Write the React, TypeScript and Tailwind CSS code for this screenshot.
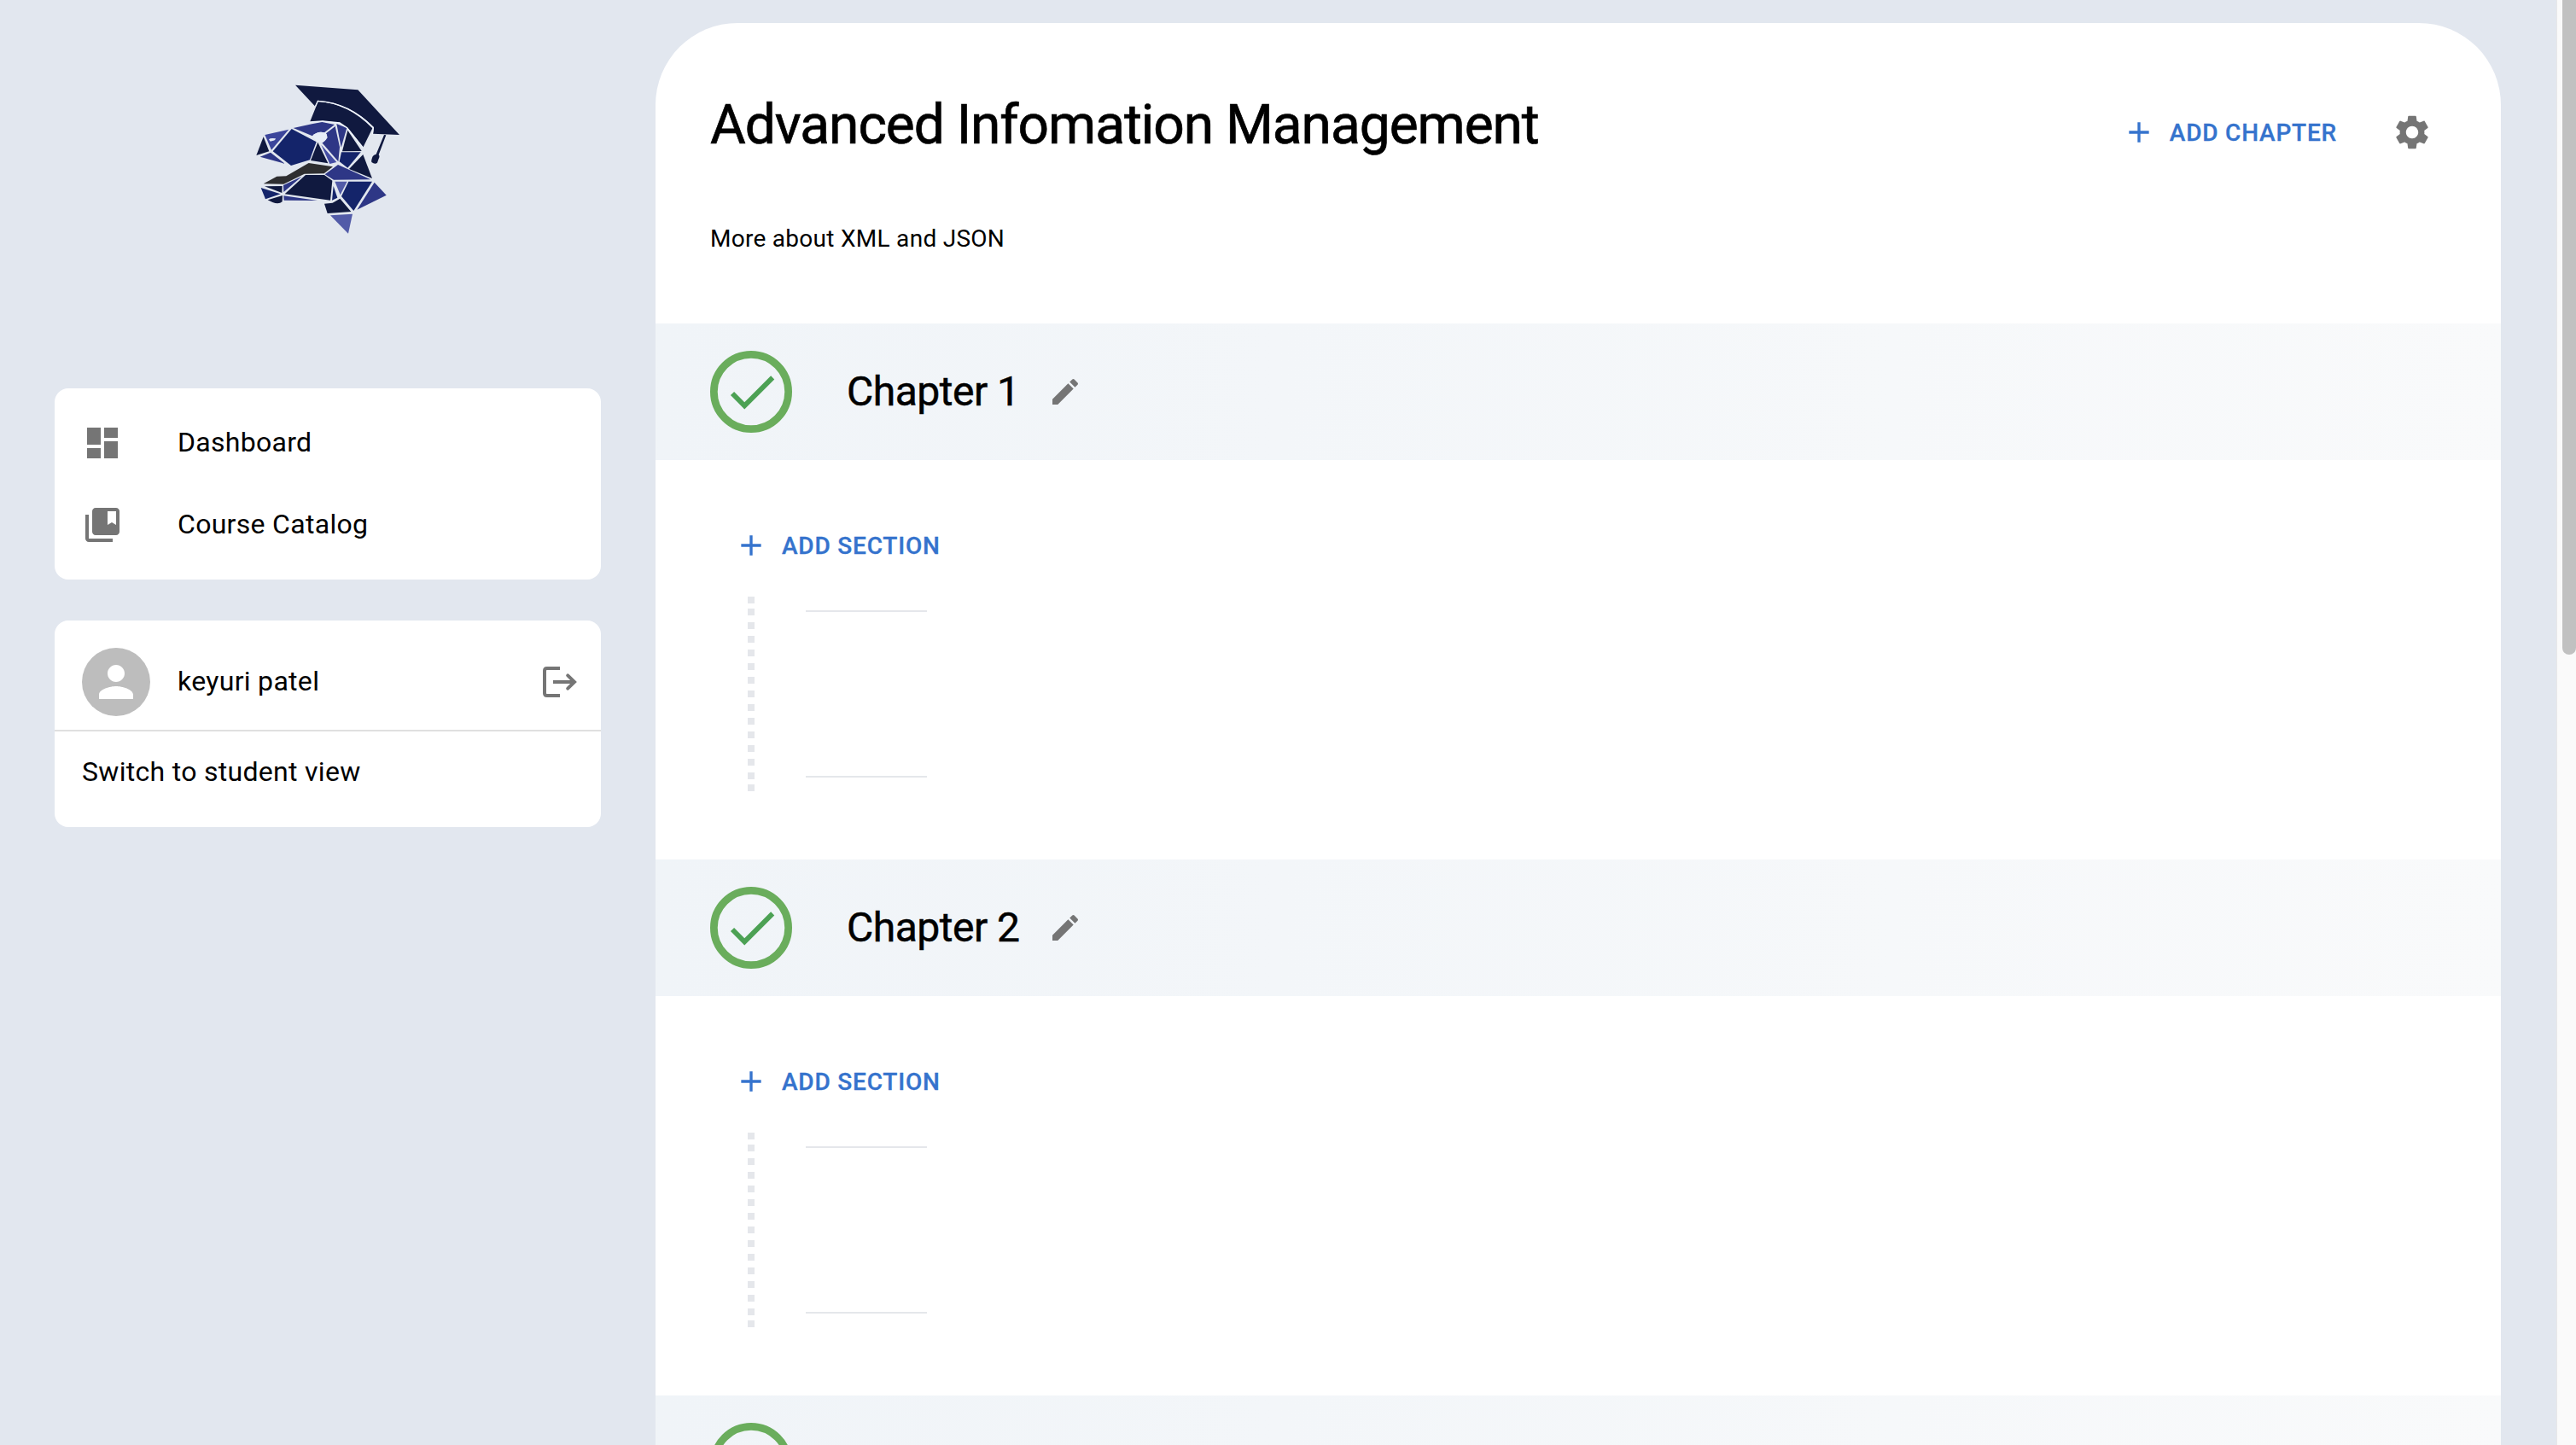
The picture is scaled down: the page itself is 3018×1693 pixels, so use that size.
import React from "react";

type IconProps = { d: string; className: string };

function Icon({ d, className }: IconProps) {
  return (
    <svg viewBox="0 0 24 24" fill="currentColor" className={className} aria-hidden="true">
      <path d={d} />
    </svg>
  );
}

const icons = {
  dashboard: "M3 13h8V3H3v10zm0 8h8v-6H3v6zm10 0h8V11h-8v10zm0-18v6h8V3h-8z",
  collections:
    "M4 6H2v14c0 1.1.9 2 2 2h14v-2H4V6zM20 2H8c-1.1 0-2 .9-2 2v12c0 1.1.9 2 2 2h12c1.1 0 2-.9 2-2V4c0-1.1-.9-2-2-2zm0 10-2.5-1.5L15 12V4h5v8z",
  person:
    "M12 12c2.21 0 4-1.79 4-4s-1.79-4-4-4-4 1.79-4 4 1.79 4 4 4zm0 2c-2.67 0-8 1.34-8 4v2h16v-2c0-2.66-5.33-4-8-4z",
  plus: "M19 13h-6v6h-2v-6H5v-2h6V5h2v6h6v2z",
  check: "M9 16.17 4.83 12l-1.42 1.41L9 19 21 7l-1.41-1.41z",
  edit: "M3 17.25V21h3.75L17.81 9.94l-3.75-3.75L3 17.25zM20.71 7.04c.39-.39.39-1.02 0-1.41l-2.34-2.34a.9959.9959 0 0 0-1.41 0l-1.83 1.83 3.75 3.75 1.83-1.83z",
  settings:
    "M19.14 12.94c.04-.3.06-.61.06-.94 0-.32-.02-.64-.07-.94l2.03-1.58c.18-.14.23-.41.12-.61l-1.92-3.32c-.12-.22-.37-.29-.59-.22l-2.39.96c-.5-.38-1.03-.7-1.62-.94l-.36-2.54c-.04-.24-.24-.41-.48-.41h-3.84c-.24 0-.43.17-.47.41l-.36 2.54c-.59.24-1.13.57-1.62.94l-2.39-.96c-.22-.08-.47 0-.59.22L2.74 8.87c-.12.21-.08.47.12.61l2.03 1.58c-.05.3-.09.63-.09.94s.02.64.07.94l-2.03 1.58c-.18.14-.23.41-.12.61l1.92 3.32c.12.22.37.29.59.22l2.39-.96c.5.38 1.03.7 1.62.94l.36 2.54c.05.24.24.41.48.41h3.84c.24 0 .44-.17.47-.41l.36-2.54c.59-.24 1.13-.56 1.62-.94l2.39.96c.22.08.47 0 .59-.22l1.92-3.32c.12-.22.07-.47-.12-.61l-2.01-1.58zM12 15.6c-1.98 0-3.6-1.62-3.6-3.6s1.62-3.6 3.6-3.6 3.6 1.62 3.6 3.6-1.62 3.6-3.6 3.6z",
};

function LogoutIcon() {
  return (
    <svg
      viewBox="0 0 24 24"
      fill="none"
      stroke="currentColor"
      strokeWidth="2"
      className="size-12 text-[#757575]"
      aria-hidden="true"
    >
      <path d="M12 4H4.4Q3 4 3 5.4V18.6Q3 20 4.4 20H12M8 12H20" />
      <path d="M16.6 8.2L20.5 12L16.6 15.8" strokeLinecap="round" />
    </svg>
  );
}

/* Faceted dinosaur head wearing a mortarboard. */
const facets: { fill: string; d: string }[] = [
  { fill: "#10193f", d: "M168 29L388 46L534 204L441 200L444 177Q360 92 247 83L238 104Z" },
  { fill: "#10193f", d: "M248 87Q355 94 439 181L406 248L352 179L324 161L264 155L219 159Z" },
  { fill: "#10193f", d: "M480 204L487 205L461 274Q466 279 461 288L456 302Q448 309 436 300Q434 294 440 280Q443 274 452 272Z" },
  { fill: "#10193f", d: "M56 211L76 262L31 276Z" },
  { fill: "#3b459b", d: "M61 204L145 185L84 257Z" },
  { fill: "#14246a", d: "M155 183L242 229L219 292L153 312L89 262Z" },
  { fill: "#2e3786", d: "M161 180L226 166L262 159L306 168L270 196Q245 190 228 208Z" },
  { fill: "#2e3786", d: "M81 266L131 305L44 281Z" },
  { fill: "#2e3786", d: "M308 174L324 247L319 298L262 232Q286 221 276 199Z" },
  { fill: "#2e3786", d: "M313 165L349 180L329 248Z" },
  { fill: "#10193f", d: "M352 188L401 261L333 262Z" },
  { fill: "#10193f", d: "M247 230L283 304L222 294Z" },
  { fill: "#444da4", d: "M259 239L313 300L289 306Z" },
  { fill: "#14246a", d: "M330 265L398 265L352 320L323 298Z" },
  { fill: "#10193f", d: "M406 273L438 357L357 324Z" },
  { fill: "#2e3786", d: "M318 309L433 361L303 362L272 343Z" },
  { fill: "#2e2e30", d: "M215 303L300 316L269 340L200 341L127 377L56 376L103 350L136 349Z" },
  { fill: "#10193f", d: "M204 345L270 345L298 365L291 434L131 412Z" },
  { fill: "#2e3786", d: "M191 350L127 405L126 381Z" },
  { fill: "#10193f", d: "M60 385L122 384L121 408Z" },
  { fill: "#14246a", d: "M47 390L116 412L63 430Z" },
  { fill: "#10193f", d: "M71 433L123 417L122 439Q110 449 88 441Z" },
  { fill: "#2e3786", d: "M127 418L246 435L128 434Z" },
  { fill: "#14246a", d: "M302 384L316 425L297 434Z" },
  { fill: "#525ba8", d: "M307 368L350 368L326 415Z" },
  { fill: "#14246a", d: "M355 368L438 368L373 471L330 420Z" },
  { fill: "#2e3786", d: "M446 371L488 416L385 467Z" },
  { fill: "#10193f", d: "M325 428L364 474L281 480L270 446L299 443Z" },
  { fill: "#525ba8", d: "M291 487L369 482L354 551Z" },
];

/* Light seams that separate the cap from its brim and from the head. */
const seams = [
  "M238 104L247 85Q360 92 442 179L439 202",
  "M219 159L264 156L324 162L350 179L406 249",
];

function Logo() {
  return (
    <svg viewBox="0 0 570 570" className="size-[190px]" role="img" aria-label="Logo">
      {facets.map((f) => (
        <path key={f.d} d={f.d} fill={f.fill} />
      ))}
      {seams.map((d) => (
        <path key={d} d={d} fill="none" stroke="#f0f5fd" strokeWidth="4" />
      ))}
      <path d="M228 208Q245 190 270 196L278 201L281 214L264 232L244 228Z" fill="#e6ecf6" />
      <path d="M75 220Q80 214 99 217Q98 225 80 227Z" fill="#e6ecf6" />
    </svg>
  );
}

function Sidebar() {
  return (
    <aside className="flex w-[768px] shrink-0 flex-col px-16">
      <div className="mt-[90px] mb-[175px] flex pl-[226px]">
        <Logo />
      </div>
      <nav className="flex h-56 flex-col rounded-2xl bg-white px-8 pt-4 text-[32px] tracking-[0.3px]">
        <a className="flex h-24 items-center gap-16">
          <Icon d={icons.dashboard} className="size-12 text-[#757575]" />
          <span className="pb-[3px]">Dashboard</span>
        </a>
        <a className="flex h-24 items-center gap-16">
          <Icon d={icons.collections} className="size-12 text-[#757575]" />
          <span className="pb-[3px]">Course Catalog</span>
        </a>
      </nav>
      <section className="mt-12 flex h-[242px] flex-col rounded-2xl bg-white text-[32px] tracking-[0.3px]">
        <div className="flex h-[130px] items-center border-b-2 border-[#e0e0e0] pt-4 pr-6 pl-8">
          <div className="flex size-20 items-center justify-center rounded-full bg-[#bdbdbd]">
            <Icon d={icons.person} className="size-[60px] text-white" />
          </div>
          <span className="ml-8 grow pb-[3px]">keyuri patel</span>
          <LogoutIcon />
        </div>
        <a className="flex h-24 items-center px-8 pb-[3px]">Switch to student view</a>
      </section>
    </aside>
  );
}

function AddButton({ label }: { label: string }) {
  return (
    <button className="flex h-10 items-center gap-4 text-[28px] leading-10 font-medium tracking-[0.8px] text-[#3573cd]">
      <Icon d={icons.plus} className="size-10" />
      <span className="pt-[2px] [-webkit-text-stroke:0.3px]">{label}</span>
    </button>
  );
}

function CompletedRing() {
  return (
    <div className="grid size-24 shrink-0 place-items-center">
      <svg viewBox="22 22 44 44" className="col-start-1 row-start-1 size-24" aria-hidden="true">
        <circle cx="44" cy="44" r="20" fill="none" stroke="#6aad5c" strokeWidth="4" />
      </svg>
      <Icon d={icons.check} className="col-start-1 row-start-1 ml-px size-[70px] text-[#4ca154]" />
    </div>
  );
}

const dots = Array.from({ length: 13 }, (_, i) => i);

function ChapterBand({ title }: { title?: string }) {
  return (
    <header className="flex h-40 shrink-0 items-center bg-linear-to-r from-[#f0f4f8] to-[#f9fafb] px-16">
      <CompletedRing />
      {title && (
        <>
          <h2 className="ml-16 text-[48px] tracking-[-0.5px] [-webkit-text-stroke:0.5px]">{title}</h2>
          <Icon d={icons.edit} className="ml-[33px] size-10 text-[#757575]" />
        </>
      )}
    </header>
  );
}

function Chapter({ title }: { title: string }) {
  return (
    <section className="flex h-[628px] shrink-0 flex-col">
      <ChapterBand title={title} />
      <div className="flex flex-col px-16 pt-20">
        <div className="flex pl-7">
          <AddButton label="ADD SECTION" />
        </div>
        <div className="mt-10 flex pl-11">
          <div className="flex h-[228px] flex-col justify-between">
            <div className="size-2 bg-gray-200" />
            <div className="flex flex-col gap-2">
              {dots.map((i) => (
                <div key={i} className="size-2 bg-gray-200" />
              ))}
            </div>
            <div className="size-2 bg-gray-200" />
          </div>
          <div className="mt-4 ml-[60px] h-[196px] w-[142px] border-y-2 border-gray-200" />
        </div>
      </div>
    </section>
  );
}

export default function App() {
  return (
    <div className="flex h-[1693px] w-[3018px] overflow-hidden bg-[#e2e7ef] font-[Roboto,sans-serif] text-black">
      <Sidebar />
      <main className="mt-[27px] flex h-[1666px] w-[2162px] shrink-0 flex-col overflow-hidden rounded-t-[96px] bg-white">
        <header className="flex h-[352px] shrink-0 flex-col px-16">
          <div className="mt-[78px] flex h-[100px] items-center">
            <h1 className="grow pb-[17px] text-[64px] leading-none tracking-[-1.03px] [-webkit-text-stroke:0.7px]">
              Advanced Infomation Management
            </h1>
            <div className="flex items-center gap-16 pr-4">
              <AddButton label="ADD CHAPTER" />
              <Icon d={icons.settings} className="size-12 text-[#757575]" />
            </div>
          </div>
          <p className="mt-[55px] text-[28px] leading-10 tracking-[0.28px]">More about XML and JSON</p>
        </header>
        <Chapter title="Chapter 1" />
        <Chapter title="Chapter 2" />
        <ChapterBand />
      </main>
      <div className="ml-auto flex w-[23px] justify-end border-l border-[#e8e8e8] bg-[#fafafa]">
        <div className="h-[767px] w-4 rounded-b-full bg-[#c1c1c1]" />
      </div>
    </div>
  );
}
